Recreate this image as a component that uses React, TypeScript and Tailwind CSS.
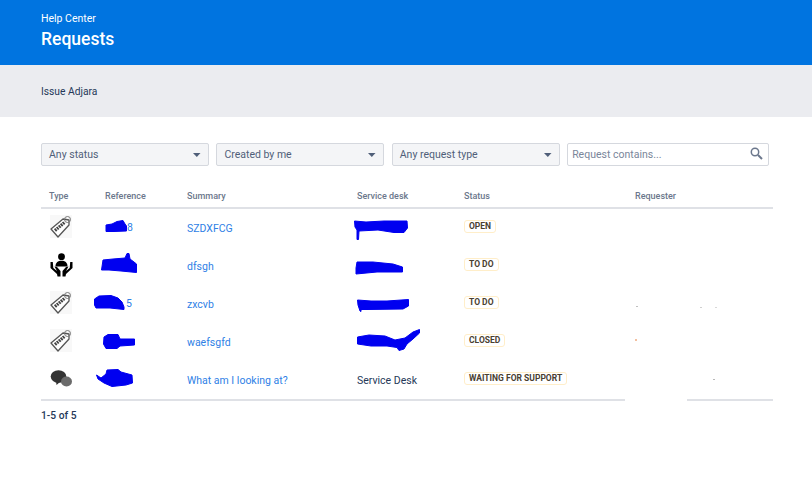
import React from "react";

function Caret() {
  return (
    <svg width="10" height="6" viewBox="0 0 10 6" className="shrink-0">
      <path d="M1 1h7.500L4.800 5z" fill="#505f79" />
    </svg>
  );
}

function TagIcon() {
  return (
    <svg width="22" height="23" viewBox="0 0 22 23" className="-mt-[3px] bg-[#f8f8f8]">
      <path d="M1 14 13 4 19 5 19 10 8 22Z" fill="#fff" stroke="#555" strokeWidth="1.300" strokeLinejoin="round" />
      <circle cx="17.500" cy="4.500" r="3" fill="none" stroke="#777" strokeWidth="1" />
      <path d="M5 15.500 14.500 7.500" stroke="#444" strokeWidth="3.200" strokeDasharray="1.800 .8" fill="none" />
    </svg>
  );
}

function HandsIcon() {
  return (
    <svg width="23" height="24" viewBox="0 0 23 24" className="-mt-[3px]">
      <circle cx="11.500" cy="3.700" r="3.400" fill="#000" />
      <path d="M5.500 13.500c0-4 2.500-5.700 6-5.700s6 1.700 6 5.700z" fill="#000" />
      <path d="M.5 9 2.800 9 3.300 15 7 18 4.500 13.500 7 14 10.500 18 10.500 23.500 7.500 23.500 7 21 .5 15Z" fill="#000" />
      <path d="M22.500 9 20.200 9 19.700 15 16 18 18.500 13.500 16 14 12.500 18 12.500 23.500 15.500 23.500 16 21 22.500 15Z" fill="#000" />
    </svg>
  );
}

function ChatIcon() {
  return (
    <svg width="23" height="20" viewBox="0 0 23 20" className="-mt-[2px]">
      <ellipse cx="8.500" cy="7.500" rx="7.800" ry="6.300" fill="#333" />
      <path d="M6 12 6.500 16 10 13z" fill="#333" />
      <ellipse cx="16.500" cy="12.500" rx="5.500" ry="5" fill="#6b6b6b" />
    </svg>
  );
}

function Blob({ d, w, h, className }: { d: string; w: number; h: number; className: string }) {
  return (
    <svg width={w} height={h} viewBox={`0 0 ${w} ${h}`} className={"absolute overflow-visible " + className}>
      <path d={d} fill="#0000f0" stroke="#0000f0" strokeWidth="1" strokeLinejoin="round" />
    </svg>
  );
}

type Row = {
  icon: React.ReactNode;
  ref: React.ReactNode;
  summary: string;
  desk: React.ReactNode;
  status: string;
  specks: { x: number; y: number; w: number; h: number; c: string }[];
};

const rows: Row[] = [
  {
    icon: <TagIcon />,
    ref: (
      <div className="relative h-5 pl-[22px] leading-5 text-[#2f7fe6]">
        8
        <Blob w={22} h={12} className="left-0 top-[2px]" d="M1 5 7 4 12 1.500 18 .5 20 4 21.500 6 21.500 11 9 11.500 1 11.500Z" />
      </div>
    ),
    summary: "SZDXFCG",
    desk: (
      <Blob w={54} h={20} className="left-[5px] top-[2px]" d="M.5 1 12 2 30 1 53 1 53.500 8 50 12.500 40 12.500 24 10 5 11 4.500 19.500 3 19.500 3 10 1 7Z" />
    ),
    status: "OPEN",
    specks: [],
  },
  {
    icon: <HandsIcon />,
    ref: (
      <div className="relative h-5">
        <Blob w={36} h={20} className="-left-[4px] -top-[3px]" d="M2 7 12 6 24 5 26 .5 28 .5 29 6 33 9 35.500 11 35.500 19.500 20 18 8 17 .5 17Z" />
      </div>
    ),
    summary: "dfsgh",
    desk: (
      <Blob w={48} h={13} className="left-[6px] top-[5px]" d="M2 1 18 1 38 3 47.500 6 47.500 11 22 11 1 13 1 7Z" />
    ),
    status: "TO DO",
    specks: [],
  },
  {
    icon: <TagIcon />,
    ref: (
      <div className="relative h-5 pl-[21px] leading-5 text-[#2f7fe6]">
        5
        <Blob w={31} h={15} className="-left-[11px] top-[1px]" d="M.5 4 5 1 17 .5 24 3 28 7 30 12 30 14.500 16 13 2 13 .5 10Z" />
      </div>
    ),
    summary: "zxcvb",
    desk: (
      <Blob w={52} h={13} className="left-[8px] top-[5px]" d="M.5 1 14 2 30 2 51.500 .5 51.500 7 46 10 10 10.500 4 10.500 4 12.500 3 12 2 9 1 6Z" />
    ),
    status: "TO DO",
    specks: [
      { x: 9, y: 21, w: 2, h: 1, c: "#c0c0c0" },
      { x: 73, y: 22, w: 2, h: 1, c: "#d0d0d0" },
      { x: 88, y: 22, w: 2, h: 1, c: "#d8d8d8" },
    ],
  },
  {
    icon: <TagIcon />,
    ref: (
      <div className="relative h-5">
        <Blob w={32} h={15} className="-left-[2px] top-[2px]" d="M1 3 5 .5 15 .5 17 5 31.500 5 31.500 11 17 12 14 14.500 3 14.500 .5 10Z" />
      </div>
    ),
    summary: "waefsgfd",
    desk: (
      <Blob w={63} h={22} className="left-[8px] -top-[3px]" d="M.5 8 12 6 28 7 38 11 48 9 56 3 62.500 .5 62.500 4 56 10 50 15 47 20 42 21.500 40 18.500 30 17 14 17 .5 15Z" />
    ),
    status: "CLOSED",
    specks: [{ x: 8, y: 16, w: 2, h: 2, c: "#f3c0a0" }],
  },
  {
    icon: <ChatIcon />,
    ref: (
      <div className="relative h-5">
        <Blob w={37} h={18} className="-left-[9px] -top-[1px]" d="M.5 6 5 9 10 5 11 1 22 .5 25 3 36 6 36.500 14 30 16 16 17.500 8 14 2 10Z" />
      </div>
    ),
    summary: "What am I looking at?",
    desk: "Service Desk",
    status: "WAITING FOR SUPPORT",
    specks: [{ x: 86, y: 18, w: 2, h: 1, c: "#b8b8b8" }],
  },
];

const cols = "grid grid-cols-[56px_82px_170px_107px_171px_146px]";

export default function App() {
  return (
    <div className="relative h-[478px] w-[812px] overflow-hidden bg-white font-['Roboto','Noto_Sans',sans-serif] text-[#253858]">
      <header className="flex h-[65px] flex-col bg-[#0074e0] pl-[41px] pt-[11px] text-white">
        <div className="text-[10.5px] leading-[15px]">Help Center</div>
        <h1 className="mt-[2px] text-[17.500px] font-medium leading-[22px]">Requests</h1>
      </header>
      <div className="flex h-[52px] items-center bg-[#ebecf0] pl-[41px] pt-[1px] text-[10.25px]">Issue Adjara</div>

      <main className="px-[41px] pt-[26px]">
        <div className="flex h-[23px] w-[728px] gap-[7.5px] text-[10.5px]">
          {["Any status", "Created by me", "Any request type"].map((label) => (
            <div
              key={label}
              className="flex w-[168px] items-center justify-between rounded-[2px] border border-[#d5d8de] bg-[#f4f5f7] pl-[7px] pr-[6px] text-[#505f79]"
            >
              <span>{label}</span>
              <Caret />
            </div>
          ))}
          <div className="flex w-[202px] items-center justify-between rounded-[2px] border border-[#d5d8de] bg-white pl-[4px] pr-[5px] text-[#7a869a]">
            <span>Request contains...</span>
            <svg width="13" height="13" viewBox="0 0 13 13" className="-mt-[2px]">
              <circle cx="5" cy="5" r="3.700" fill="none" stroke="#6b778c" strokeWidth="1.500" />
              <path d="M8 8l4 4" stroke="#6b778c" strokeWidth="2" />
            </svg>
          </div>
        </div>

        <div className={`${cols} mt-[22px] h-[21px] w-[732px] border-b-2 border-[#dfe1e6] text-[9px] font-medium leading-[17px] text-[#6b778c]`}>
          {["Type", "Reference", "Summary", "Service desk", "Status", "Requester"].map((h) => (
            <div key={h} className="px-2">{h}</div>
          ))}
        </div>

        <div className="w-[732px] border-b-2 border-[#dfe1e6]">
          {rows.map((r, i) => (
            <div key={i} className={`${cols} h-[38px] items-center text-[10.5px]`}>
              <div className="pl-[9px]">{r.icon}</div>
              <div className="px-2">{r.ref}</div>
              <div className="px-2 pt-[1px] text-[#2f7fe6]">{r.summary}</div>
              <div className="relative h-5 px-2 pt-[1px] leading-5">{r.desk}</div>
              <div className="-mt-[4px] flex px-2">
                <span className="rounded-[3px] border border-[#ffeec9] bg-white px-[4px] text-[8.5px] font-bold leading-[11px] text-[#4a4030]">
                  {r.status}
                </span>
              </div>
              <svg width="146" height="38" viewBox="0 0 146 38">
                {r.specks.map((s, k) => (
                  <rect key={k} x={s.x} y={s.y} width={s.w} height={s.h} fill={s.c} />
                ))}
              </svg>
            </div>
          ))}
        </div>
        <div className="absolute left-[625px] top-[396px] h-[8px] w-[62px] bg-white" />

        <div className="mt-[7px] text-[10.25px] font-medium leading-[15px]">1-5 of 5</div>
      </main>
    </div>
  );
}
